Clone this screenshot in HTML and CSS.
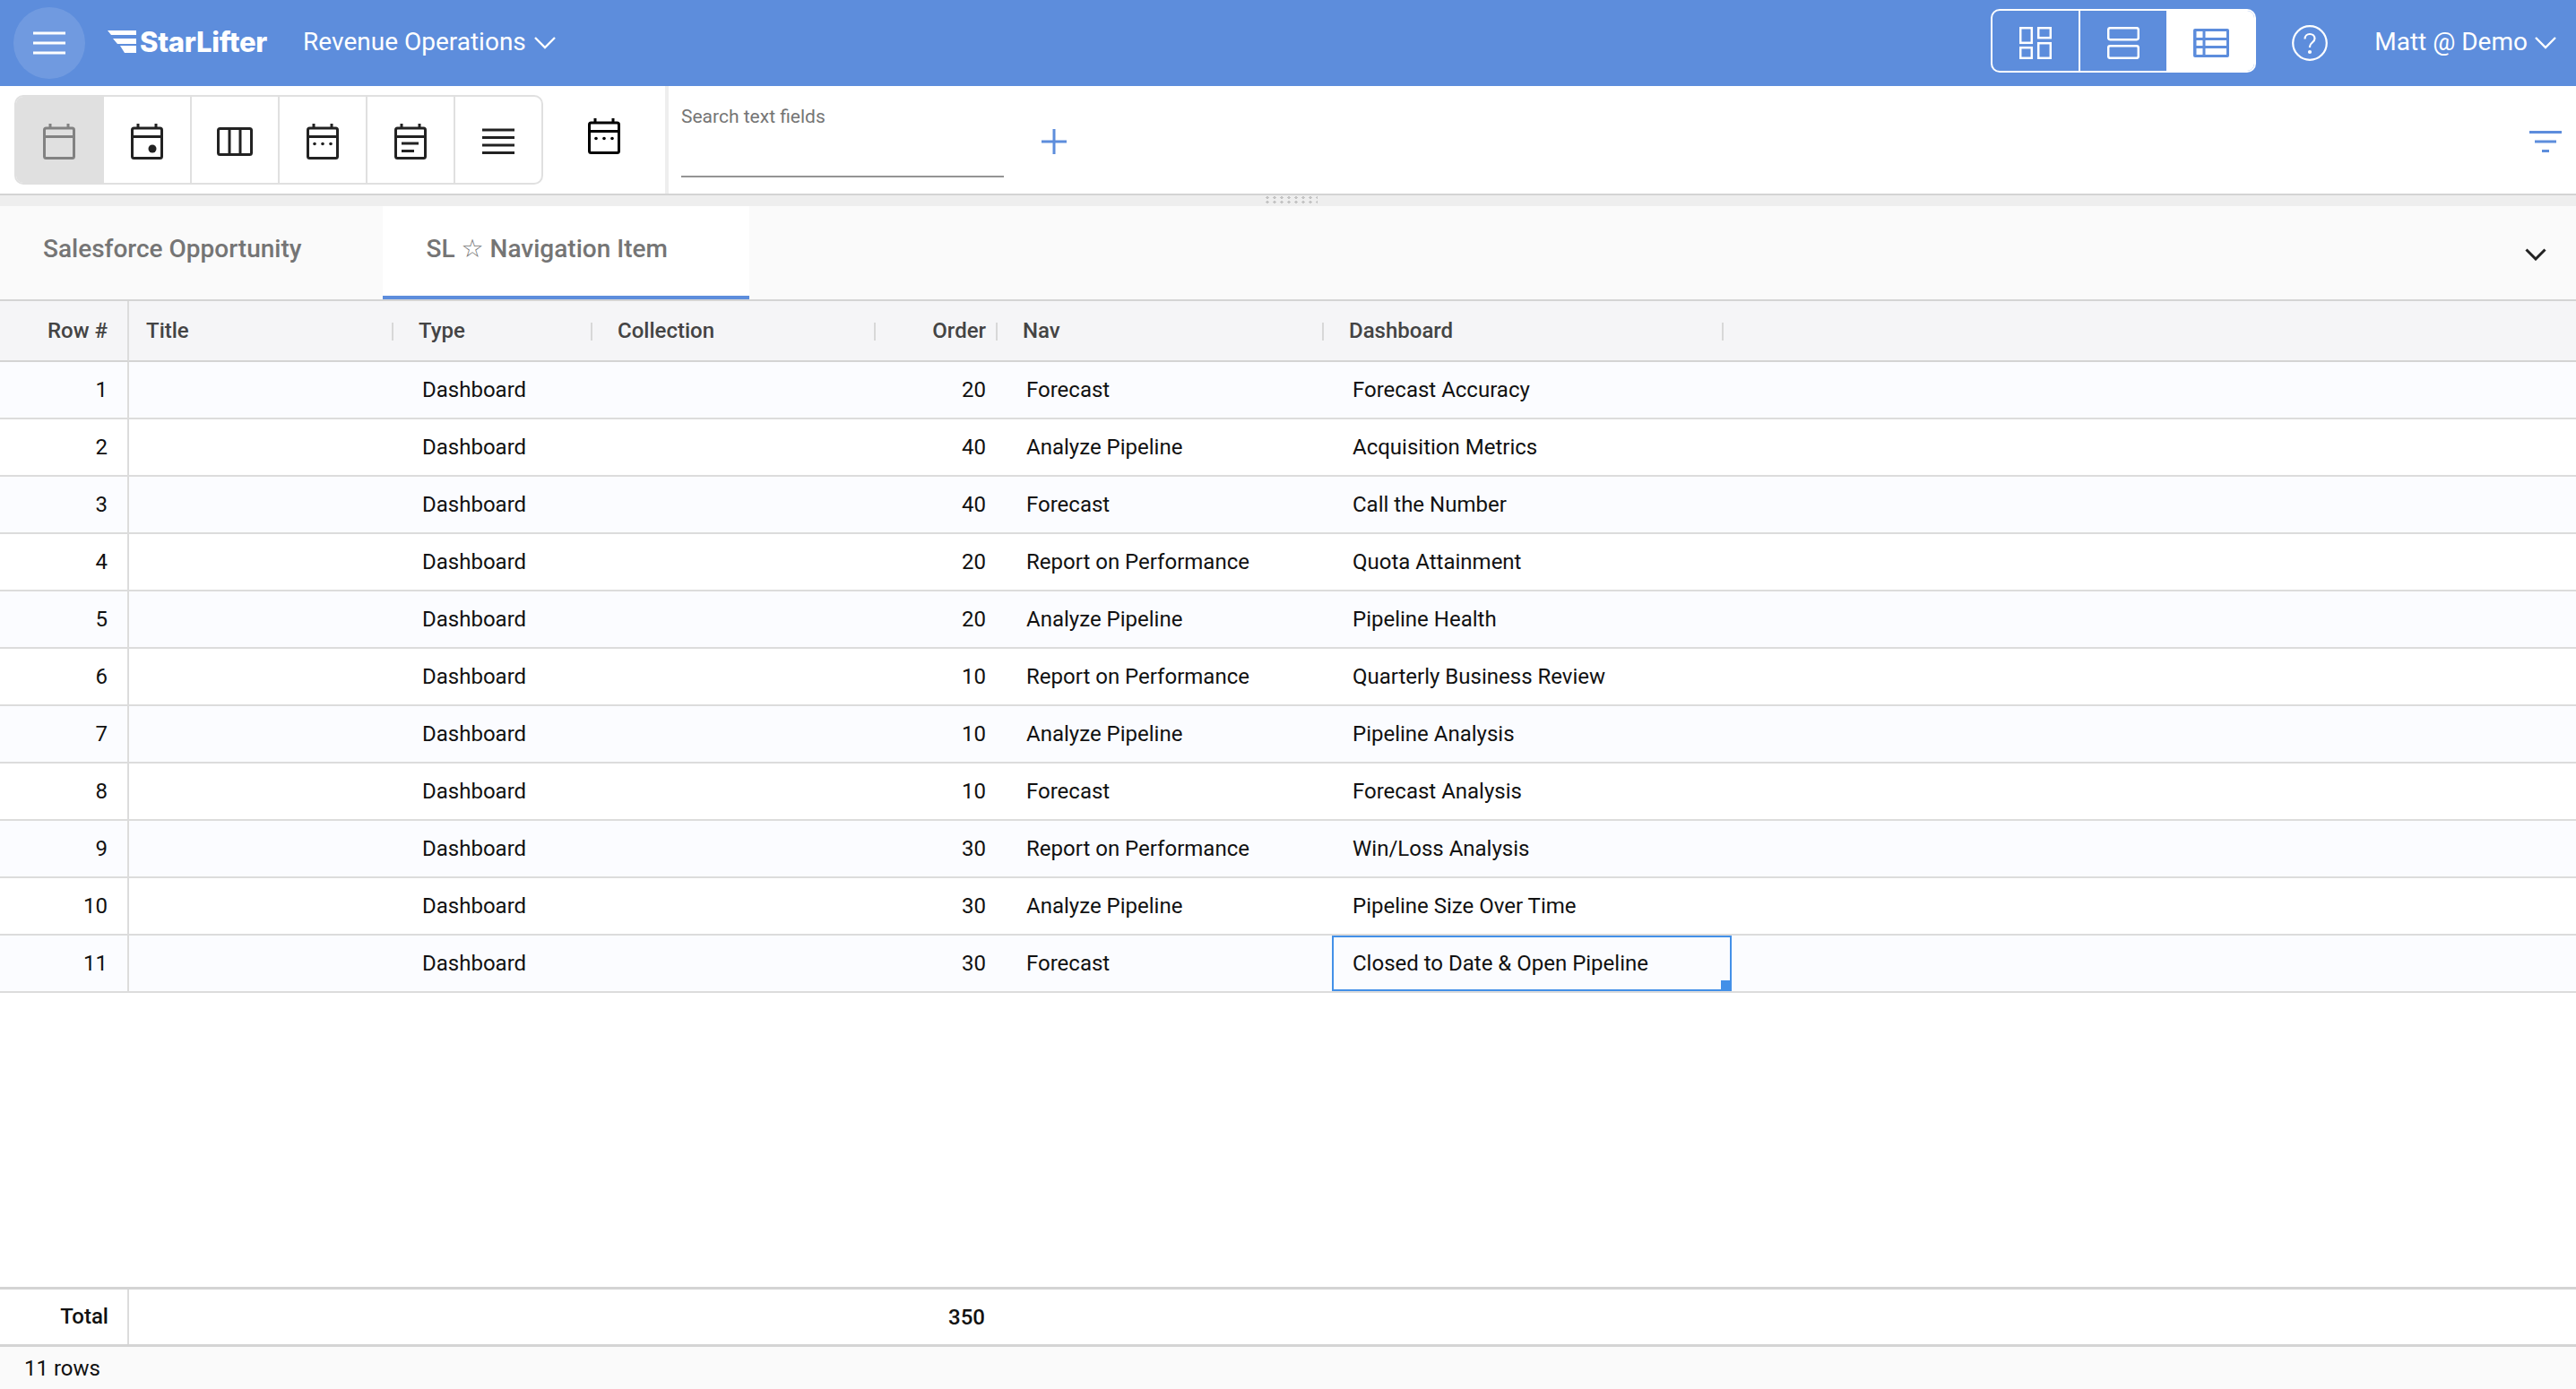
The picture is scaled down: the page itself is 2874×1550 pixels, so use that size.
FILE: index.html
```html
<!DOCTYPE html>
<html lang="en">
<head>
  <meta charset="UTF-8">
  <meta name="viewport" content="width=device-width, initial-scale=1.0">
  <title>StarLifter - Revenue Operations</title>
  <link rel="stylesheet" href="styles.css">
</head>
<body>
  <header class="topbar">
    <button class="menu-btn">
      <svg width="36" height="26" viewBox="0 0 36 26"><path d="M0 2h36M0 13h36M0 24h36" stroke="#fff" stroke-width="3"/></svg>
    </button>
    <div class="logo">
      <svg class="logo-wing" width="32" height="25" viewBox="0 0 32 25"><path d="M0 0h32v5H4zM6 9h26v6H11zM14 17h18v8H19z" fill="#fff"/></svg>
      <span class="logo-text">StarLifter</span>
    </div>
    <div class="app-name">Revenue Operations
      <svg class="chevron" width="24" height="14" viewBox="0 0 24 14"><path d="M1 1l11 11L23 1" fill="none" stroke="#fff" stroke-width="2.4"/></svg>
    </div>
    <div class="view-switch">
      <div class="view-btn">
        <svg width="36" height="36" viewBox="0 0 36 36" fill="none" stroke="#fff" stroke-width="2.5"><rect x="1.2" y="1.2" width="12.6" height="16.6"/><rect x="21.2" y="1.2" width="13.6" height="11"/><rect x="1.2" y="23.2" width="12.6" height="11.6"/><rect x="21.2" y="18.2" width="13.6" height="16.6"/></svg>
      </div>
      <div class="view-btn">
        <svg width="36" height="36" viewBox="0 0 36 36" fill="none" stroke="#fff" stroke-width="2.5"><rect x="1.2" y="1.2" width="33.6" height="13" rx="2"/><rect x="1.2" y="21.2" width="33.6" height="13.6" rx="2"/></svg>
      </div>
      <div class="view-btn active">
        <svg width="40" height="32" viewBox="0 0 40 32"><rect width="40" height="32" rx="2" fill="#5d8ddc"/><path d="M3.500 3h7v7h-7zM13.500 3H37v7H13.500zM3.500 13h7v6h-7zM13.500 13H37v6H13.500zM3.500 22h7v7h-7zM13.500 22H37v7H13.500z" fill="#fff"/></svg>
      </div>
    </div>
    <svg class="help" width="40" height="40" viewBox="0 0 40 40" fill="none" stroke="#fff" stroke-width="2.2"><circle cx="20" cy="20" r="18.800"/><path d="M14.500 15.500c0-3.500 2.500-5.500 5.500-5.500s5.500 2 5.500 5c0 4.500-5.500 4.500-5.500 9v1"/><circle cx="20" cy="30" r="1" fill="#fff"/></svg>
    <div class="user">Matt @ Demo
      <svg class="chevron" width="24" height="14" viewBox="0 0 24 14"><path d="M1 1l11 11L23 1" fill="none" stroke="#fff" stroke-width="2.4"/></svg>
    </div>
  </header>

  <div class="toolbar">
    <div class="cal-group">
      <div class="cal-btn selected">
        <svg width="36" height="40" viewBox="0 0 36 40" fill="none" stroke="#828282" stroke-width="3"><path d="M8 0v5M28 0v5"/><rect x="1.500" y="5" width="33" height="33.500" rx="2"/><path d="M1.500 14.500h33"/></svg>
      </div>
      <div class="cal-btn">
        <svg width="36" height="40" viewBox="0 0 36 40" fill="none" stroke="#222" stroke-width="3"><path d="M8 0v5M28 0v5"/><rect x="1.500" y="5" width="33" height="33.500" rx="2"/><path d="M1.500 14.500h33"/><circle cx="24" cy="28" r="4.500" fill="#222" stroke="none"/></svg>
      </div>
      <div class="cal-btn">
        <svg width="40" height="32" viewBox="0 0 40 32" fill="none" stroke="#222" stroke-width="3"><rect x="1.500" y="1.500" width="37" height="29" rx="2"/><path d="M14 1.500v29M26 1.500v29"/></svg>
      </div>
      <div class="cal-btn">
        <svg width="36" height="40" viewBox="0 0 36 40" fill="none" stroke="#222" stroke-width="3"><path d="M8 0v5M28 0v5"/><rect x="1.500" y="5" width="33" height="33.500" rx="2"/><path d="M1.500 14.500h33"/><g fill="#222" stroke="none"><circle cx="9" cy="22.500" r="1.800"/><circle cx="18" cy="22.500" r="1.800"/><circle cx="27" cy="22.500" r="1.800"/></g></svg>
      </div>
      <div class="cal-btn">
        <svg width="36" height="40" viewBox="0 0 36 40" fill="none" stroke="#222" stroke-width="3"><path d="M8 0v5M28 0v5"/><rect x="1.500" y="5" width="33" height="33.500" rx="2"/><path d="M1.500 14.500h33M8 22h19M8 30.500h14"/></svg>
      </div>
      <div class="cal-btn">
        <svg width="36" height="30" viewBox="0 0 36 30" fill="none" stroke="#222" stroke-width="3"><path d="M0 2h36M0 10.500h36M0 19h36M0 27.500h36"/></svg>
      </div>
    </div>
    <svg class="cal-single" width="36" height="40" viewBox="0 0 36 40" fill="none" stroke="#000" stroke-width="3"><path d="M8 0v5M28 0v5"/><rect x="1.500" y="5" width="33" height="33.500" rx="2"/><path d="M1.500 14.500h33"/><g fill="#000" stroke="none"><circle cx="9" cy="22.500" r="1.800"/><circle cx="18" cy="22.500" r="1.800"/><circle cx="27" cy="22.500" r="1.800"/></g></svg>
    <div class="pane-divider"></div>
    <div class="search">
      <label class="search-label">Search text fields</label>
      <div class="search-line"></div>
    </div>
    <svg class="plus" width="28" height="28" viewBox="0 0 28 28"><path d="M14 0v28M0 14h28" stroke="#5d8ddc" stroke-width="3"/></svg>
    <svg class="filter" width="36" height="26" viewBox="0 0 36 26"><path d="M0 1.500h36M6 12h24M14 22.500h8" stroke="#5d8ddc" stroke-width="3"/></svg>
  </div>

  <div class="resize-band"><div class="resize-dots"></div></div>

  <nav class="tabs">
    <div class="tab">Salesforce Opportunity</div>
    <div class="tab active">SL ☆ Navigation Item</div>
    <svg class="tabs-more" width="24" height="14" viewBox="0 0 24 14"><path d="M1.500 1.500L12 12 22.500 1.500" fill="none" stroke="#222" stroke-width="3"/></svg>
  </nav>

  <main class="grid-wrap">
    <table class="grid">
      <colgroup>
        <col class="c-row"><col class="c-title"><col class="c-type"><col class="c-coll"><col class="c-order"><col class="c-nav"><col class="c-dash"><col>
      </colgroup>
      <thead>
        <tr>
          <th class="num row-head">Row #</th>
          <th>Title</th>
          <th>Type</th>
          <th>Collection</th>
          <th class="num">Order</th>
          <th>Nav</th>
          <th>Dashboard</th>
          <th class="filler"></th>
        </tr>
      </thead>
      <tbody>
        <tr><td class="num row-head">1</td><td></td><td>Dashboard</td><td></td><td class="num">20</td><td>Forecast</td><td>Forecast Accuracy</td><td></td></tr>
        <tr><td class="num row-head">2</td><td></td><td>Dashboard</td><td></td><td class="num">40</td><td>Analyze Pipeline</td><td>Acquisition Metrics</td><td></td></tr>
        <tr><td class="num row-head">3</td><td></td><td>Dashboard</td><td></td><td class="num">40</td><td>Forecast</td><td>Call the Number</td><td></td></tr>
        <tr><td class="num row-head">4</td><td></td><td>Dashboard</td><td></td><td class="num">20</td><td>Report on Performance</td><td>Quota Attainment</td><td></td></tr>
        <tr><td class="num row-head">5</td><td></td><td>Dashboard</td><td></td><td class="num">20</td><td>Analyze Pipeline</td><td>Pipeline Health</td><td></td></tr>
        <tr><td class="num row-head">6</td><td></td><td>Dashboard</td><td></td><td class="num">10</td><td>Report on Performance</td><td>Quarterly Business Review</td><td></td></tr>
        <tr><td class="num row-head">7</td><td></td><td>Dashboard</td><td></td><td class="num">10</td><td>Analyze Pipeline</td><td>Pipeline Analysis</td><td></td></tr>
        <tr><td class="num row-head">8</td><td></td><td>Dashboard</td><td></td><td class="num">10</td><td>Forecast</td><td>Forecast Analysis</td><td></td></tr>
        <tr><td class="num row-head">9</td><td></td><td>Dashboard</td><td></td><td class="num">30</td><td>Report on Performance</td><td>Win/Loss Analysis</td><td></td></tr>
        <tr><td class="num row-head">10</td><td></td><td>Dashboard</td><td></td><td class="num">30</td><td>Analyze Pipeline</td><td>Pipeline Size Over Time</td><td></td></tr>
        <tr><td class="num row-head">11</td><td></td><td>Dashboard</td><td></td><td class="num">30</td><td>Forecast</td><td class="cell-selected">Closed to Date &amp; Open Pipeline<span class="fill-handle"></span></td><td></td></tr>
      </tbody>
    </table>
  </main>

  <div class="totals">
    <div class="totals-label">Total</div>
    <div class="totals-value">350</div>
  </div>
  <footer class="status">11 rows</footer>
</body>
</html>
```

FILE: styles.css
```css
* {
  box-sizing: border-box;
}
html, body {
  height: 100%;
}
body {
  margin: 0;
  display: flex;
  flex-direction: column;
  font-family: Roboto, "DejaVu Sans", sans-serif;
  font-size: 24px;
  color: #111;
  background: #fff;
  overflow: hidden;
}

/* top bar */
.topbar {
  height: 96px;
  flex: none;
  display: flex;
  align-items: center;
  background: #5d8ddc;
  color: #fff;
  padding-left: 15px;
}
.menu-btn {
  width: 80px;
  height: 80px;
  padding: 0;
  border: 0;
  border-radius: 50%;
  background: rgba(255, 255, 255, 0.12);
  display: flex;
  align-items: center;
  justify-content: center;
}
.logo {
  margin-left: 25px;
  margin-top: -4px;
  display: flex;
  align-items: center;
  gap: 4px;
}
.logo-wing {
  flex: none;
}
.logo-text {
  font-family: Inter, sans-serif;
  font-weight: 800;
  font-size: 31px;
  letter-spacing: -0.3px;
  line-height: 1;
}
.app-name {
  margin-left: 40px;
  margin-top: -4px;
  font-size: 28px;
  display: flex;
  align-items: center;
  gap: 9px;
}
.chevron {
  margin-top: 4px;
}
.view-switch {
  margin-left: auto;
  width: 296px;
  height: 71px;
  margin-top: -5px;
  display: flex;
  border: 2px solid #fff;
  border-radius: 10px;
  overflow: hidden;
}
.view-btn {
  flex: 1;
  display: flex;
  align-items: center;
  justify-content: center;
  padding-top: 4px;
  border-right: 2px solid #fff;
}
.view-btn.active {
  background: #fff;
  border-right: 0;
}
.help {
  margin-left: 40px;
  flex: none;
}
.user {
  margin-left: 52px;
  margin-right: 22px;
  margin-top: -4px;
  font-size: 28px;
  display: flex;
  align-items: center;
  gap: 8px;
}

/* toolbar */
.toolbar {
  height: 122px;
  flex: none;
  display: flex;
  align-items: flex-start;
  padding-left: 16px;
  padding-right: 16px;
  border-bottom: 2px solid #d4d4d4;
}
.cal-group {
  margin-top: 10px;
  width: 590px;
  height: 100px;
  display: flex;
  border: 2px solid #e0e0e0;
  border-radius: 10px;
  overflow: hidden;
}
.cal-btn {
  width: 98px;
  display: flex;
  align-items: center;
  justify-content: center;
  padding-top: 4px;
  border-right: 2px solid #e0e0e0;
}
.cal-btn:last-child {
  border-right: 0;
  flex: 1;
}
.cal-btn.selected {
  background: #e0e0e0;
}
.cal-single {
  margin-left: 50px;
  margin-top: 36px;
  flex: none;
}
.pane-divider {
  margin-left: 50px;
  width: 4px;
  height: 120px;
  background: #eee;
}
.search {
  margin-left: 14px;
  width: 360px;
  height: 120px;
  padding-top: 22px;
  display: flex;
  flex-direction: column;
}
.search-label {
  font-size: 21px;
  line-height: 24px;
  color: #757575;
}
.search-line {
  margin-top: 54px;
  height: 2px;
  background: #949494;
}
.plus {
  margin-left: 42px;
  margin-top: 48px;
  flex: none;
}
.filter {
  margin-left: auto;
  margin-top: 50px;
  flex: none;
}

.resize-band {
  height: 12px;
  flex: none;
  background: #eee;
  display: flex;
  justify-content: center;
}
.resize-dots {
  width: 60px;
  height: 10px;
  margin-left: 6px;
  background-image: radial-gradient(#c4c4c4 1.7px, transparent 1.8px);
  background-size: 8px 5px;
}

/* tabs */
.tabs {
  height: 106px;
  flex: none;
  display: flex;
  align-items: stretch;
  background: #fafafa;
  border-bottom: 2px solid #d4d4d4;
}
.tab {
  display: flex;
  align-items: center;
  padding: 0 91px 10px 48px;
  font-size: 28px;
  font-weight: 500;
  color: #757575;
  background: #fafafa;
}
.tab.active {
  padding-bottom: 6px;
  background: #fff;
  border-bottom: 4px solid #5d8ddc;
}
.tabs-more {
  margin-left: auto;
  margin-right: 33px;
  margin-top: 4px;
  align-self: center;
}

/* data grid */
.grid-wrap {
  flex: 1;
  min-height: 0;
  overflow: hidden;
}
.grid {
  width: 100%;
  border-collapse: separate;
  border-spacing: 0;
  table-layout: fixed;
}
.c-row { width: 144px; }
.c-title { width: 304px; }
.c-type { width: 222px; }
.c-coll { width: 316px; }
.c-order { width: 136px; }
.c-nav { width: 364px; }
.c-dash { width: 446px; }
th {
  position: relative;
  height: 68px;
  padding: 0 19px;
  text-align: left;
  font-weight: 500;
  font-size: 24px;
  color: #444;
  background: #f5f5f7;
  border-bottom: 2px solid #d4d4d4;
}
th::after {
  content: "";
  position: absolute;
  right: 9px;
  top: 24px;
  width: 2px;
  height: 20px;
  background: #d8d8d8;
}
th.row-head::after, th.filler::after {
  display: none;
}
td {
  height: 64px;
  padding: 0 23px;
  font-size: 24px;
  color: #111;
  border-bottom: 2px solid #dcdcdc;
  white-space: nowrap;
}
tbody tr:nth-child(odd) td {
  background: #fbfcff;
}
th.num, td.num {
  text-align: right;
  padding: 0 22px 0 0;
}
.row-head {
  border-right: 2px solid #dcdcdc;
}
.cell-selected {
  position: relative;
  box-shadow: inset 0 0 0 2px #4390e8;
}
.fill-handle {
  position: absolute;
  right: 0;
  bottom: 0;
  width: 12px;
  height: 12px;
  background: #4390e8;
}

/* totals + status */
.totals {
  height: 67px;
  flex: none;
  display: flex;
  align-items: center;
  border-top: 3px solid #d4d4d4;
  border-bottom: 3px solid #d4d4d4;
  font-weight: 500;
}
.totals-label {
  width: 144px;
  height: 100%;
  line-height: 61px;
  padding-right: 21px;
  text-align: right;
  border-right: 2px solid #dcdcdc;
}
.totals-value {
  margin-left: 955px;
  width: 0;
  flex: none;
  direction: rtl;
}
.status {
  height: 47px;
  flex: none;
  padding-left: 27px;
  line-height: 48px;
  background: #fafafa;
}
```
